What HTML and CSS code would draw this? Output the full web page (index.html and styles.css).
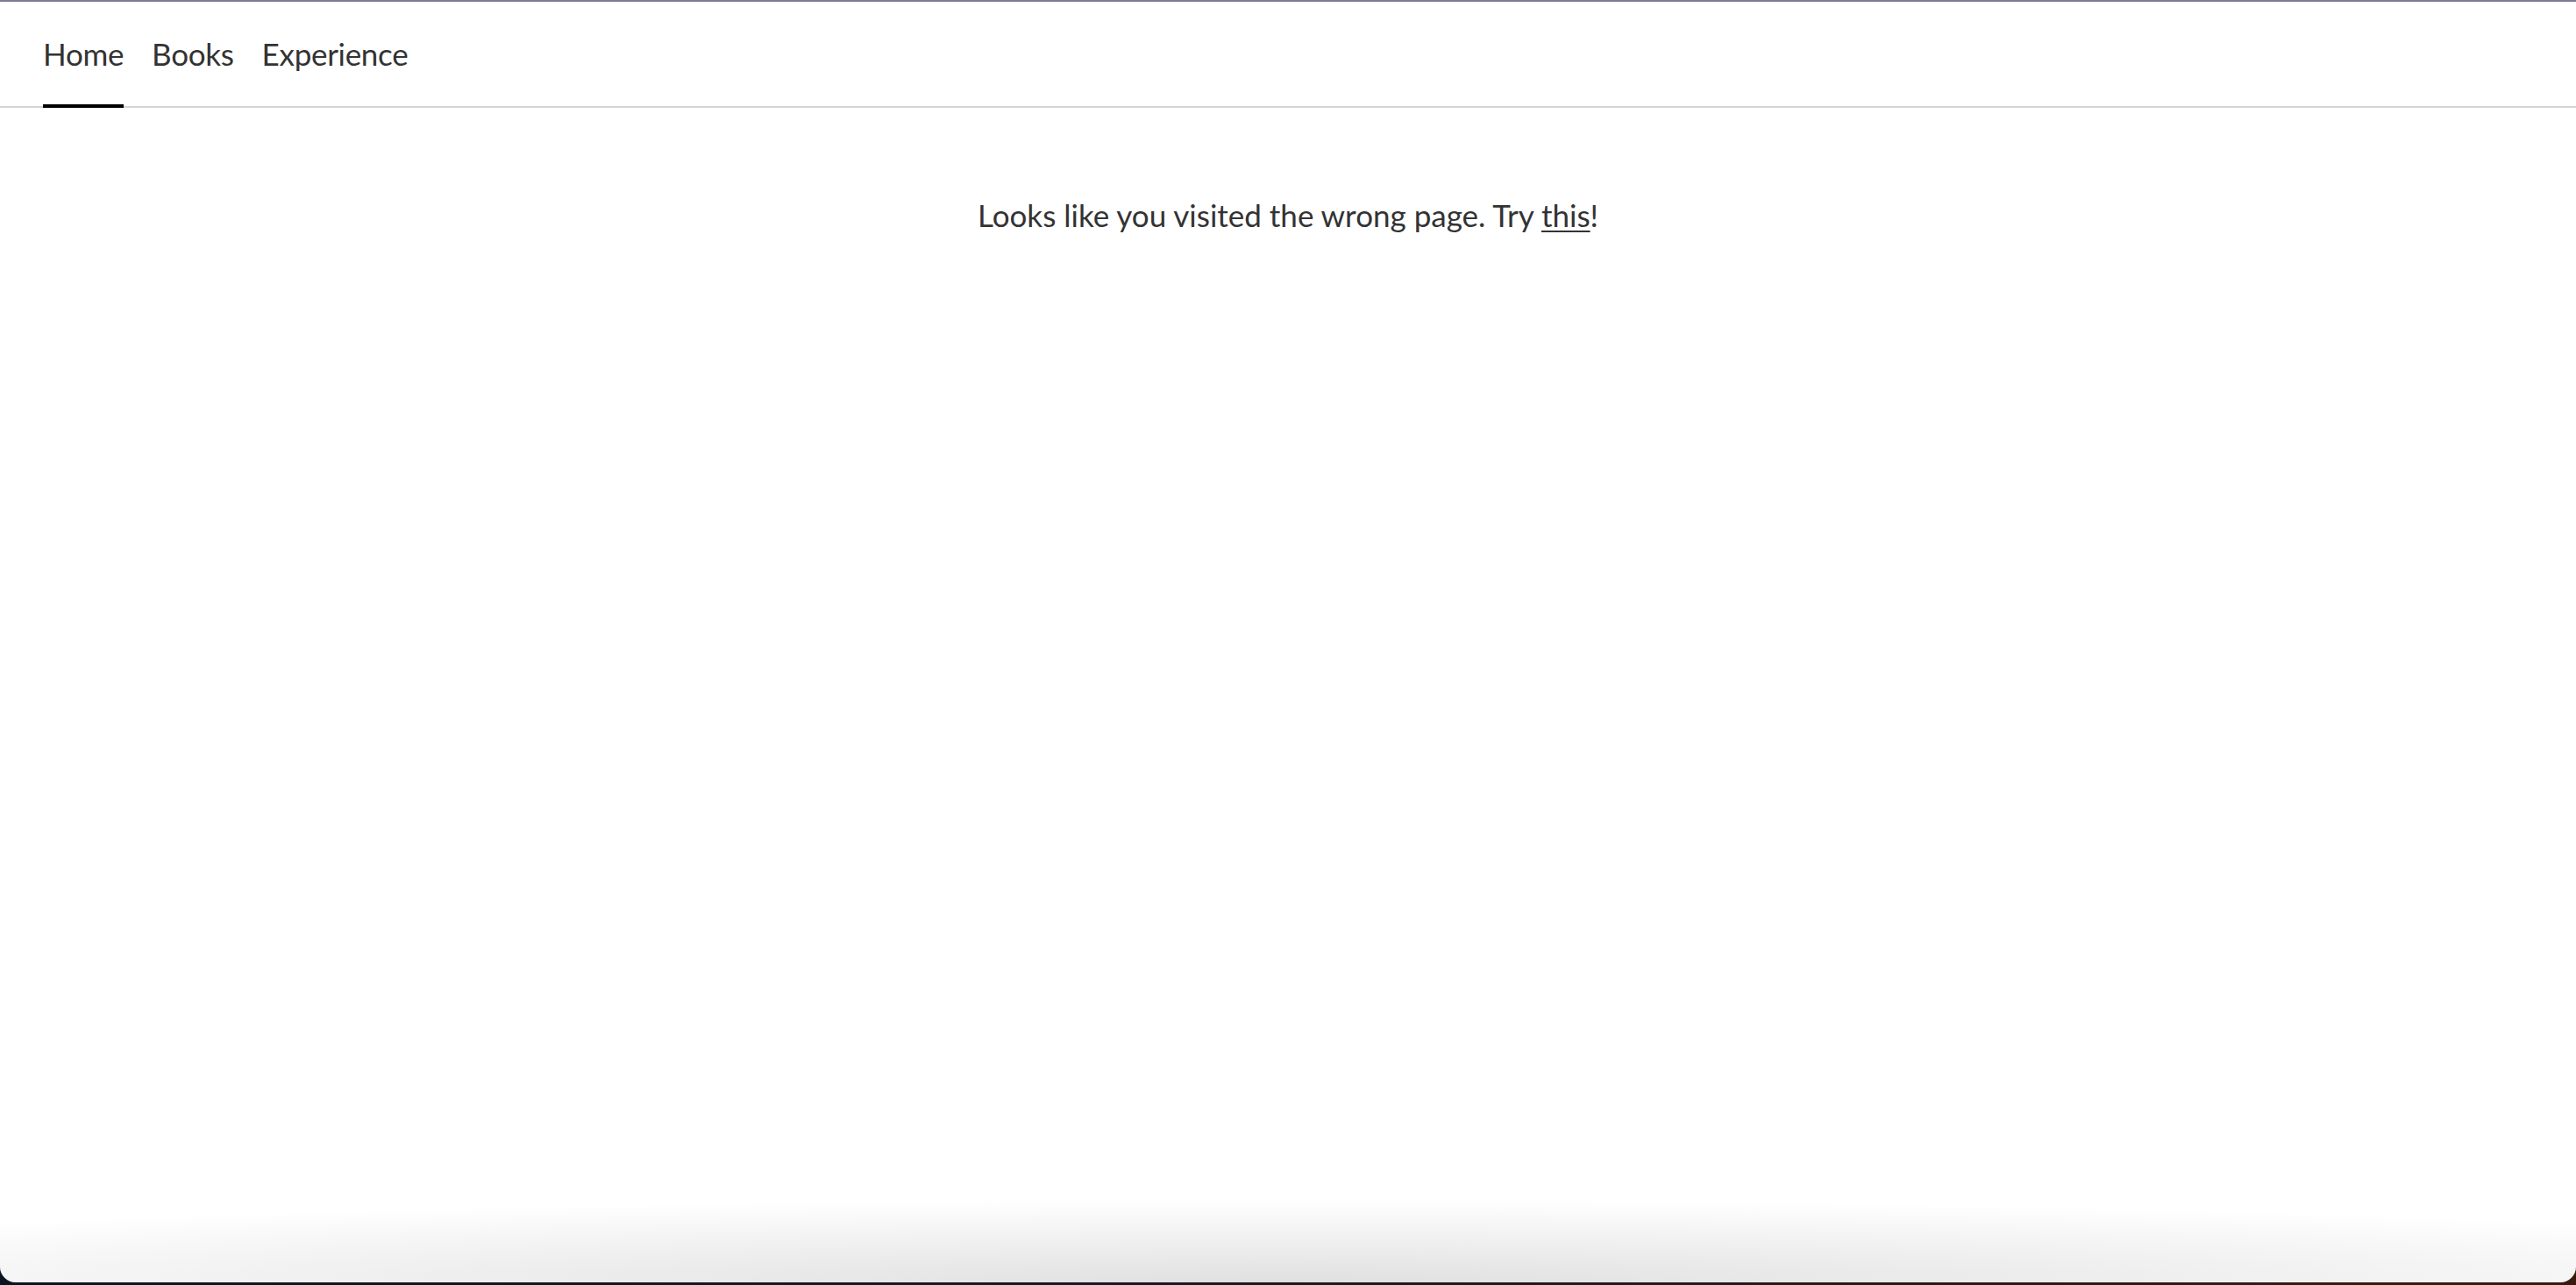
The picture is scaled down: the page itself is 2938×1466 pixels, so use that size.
FILE: index.html
```html
<!DOCTYPE html>
<html lang="en">
<head>
<meta charset="utf-8">
<title>Not found</title>
<link rel="stylesheet" href="styles.css">
</head>
<body>
<div class="window">
  <header class="topnav">
    <a class="navlink active" href="#">Home</a>
    <a class="navlink" href="#">Books</a>
    <a class="navlink" href="#">Experience</a>
  </header>
  <main class="content">
    <p class="message">Looks like you visited the wrong page. Try <a class="inline-link" href="#">this</a>!</p>
  </main>
</div>
</body>
</html>
```
FILE: styles.css
```css
html, body {
  margin: 0;
  padding: 0;
}
body {
  background: linear-gradient(90deg, #0b1522 0%, #1a1a1e 50%, #3b1a0e 100%);
  height: 1466px;
  overflow: hidden;
  font-family: "Lato", "Liberation Sans", sans-serif;
  color: #333333;
}
.window {
  height: 1463px;
  box-sizing: border-box;
  border-top: 2px solid #7f7a93;
  border-radius: 0 0 18px 18px;
  background:
    radial-gradient(ellipse 72% 95px at 50% 100%, #e0e0e0 0%, rgba(255,255,255,0) 100%),
    #ffffff;
  overflow: hidden;
  display: flex;
  flex-direction: column;
}
.topnav {
  display: flex;
  gap: 32px;
  padding-left: 49px;
  border-bottom: 2px solid #d4d4d4;
}
.navlink {
  font-size: 35px;
  line-height: 42px;
  letter-spacing: -0.3px;
  color: #333333;
  text-decoration: none;
  padding: 37.5px 0 37.5px;
  border-bottom: 4px solid transparent;
  margin-bottom: -2px;
}
.navlink.active {
  border-bottom-color: #000000;
}
.content {
  padding-top: 100.5px;
  text-align: center;
}
.message {
  margin: 0;
  font-size: 35px;
  line-height: 42px;
  color: #333333;
}
.inline-link {
  color: #333333;
  text-decoration: underline;
  text-decoration-thickness: 2px;
  text-underline-offset: 4px;
}
```
